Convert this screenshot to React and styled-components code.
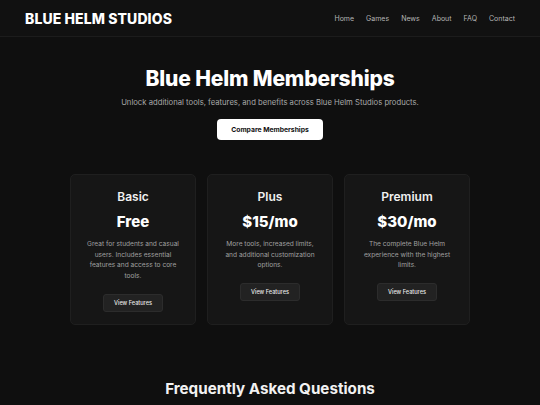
import React from "react";
import styled, { createGlobalStyle } from "styled-components";

const GlobalStyle = createGlobalStyle`
  html, body {
    margin: 0;
    padding: 0;
    background: #0f0f0f;
    font-family: Inter, "Noto Sans", sans-serif;
    color: #f2f2f2;
  }
  * { box-sizing: border-box; }
`;

const Header = styled.header`
  display: flex;
  align-items: center;
  justify-content: space-between;
  height: 37px;
  padding: 0 25px;
  background: #111111;
  border-bottom: 1px solid #1c1c1c;
`;

const Logo = styled.div`
  font-size: 14px;
  font-weight: 800;
  letter-spacing: 0.1px;
  color: #ffffff;
`;

const Nav = styled.nav`
  display: flex;
  gap: 12px;
`;

const NavLink = styled.a`
  font-size: 7px;
  color: #b5b5b5;
  text-decoration: none;
`;

const Hero = styled.section`
  display: flex;
  flex-direction: column;
  align-items: center;
  padding-top: 27px;
`;

const Title = styled.h1`
  margin: 0;
  font-size: 21px;
  font-weight: 800;
  letter-spacing: -0.15px;
  line-height: 30px;
  color: #ffffff;
`;

const Subtitle = styled.p`
  margin: 4px 0 0;
  font-size: 7.7px;
  color: #a8a8a8;
`;

const PrimaryButton = styled.button`
  margin-top: 12px;
  width: 106px;
  height: 21px;
  border: none;
  border-radius: 4px;
  background: #ffffff;
  color: #111;
  font-family: inherit;
  font-size: 6.8px;
  font-weight: 700;
`;

const Cards = styled.div`
  display: grid;
  grid-template-columns: repeat(3, 126px);
  gap: 11px;
  justify-content: center;
  margin-top: 34px;
`;

const Card = styled.div`
  display: flex;
  flex-direction: column;
  align-items: center;
  height: 151px;
  padding: 14px 15px 0;
  background: #161616;
  border: 1px solid #1f1f1f;
  border-radius: 5px;
  text-align: center;
`;

const PlanName = styled.h3`
  margin: 0;
  font-size: 12px;
  font-weight: 600;
  line-height: 16px;
  color: #f0f0f0;
`;

const Price = styled.div`
  margin-top: 7px;
  font-size: 15px;
  font-weight: 800;
  line-height: 19px;
  color: #ffffff;
`;

const Description = styled.p`
  margin: 8px 0 0;
  font-size: 6.6px;
  line-height: 10.7px;
  color: #a0a0a0;
`;

const SecondaryButton = styled.button`
  margin-top: 12px;
  width: 60px;
  height: 18px;
  border: 1px solid #2c2c2c;
  border-radius: 3px;
  background: #222222;
  color: #e8e8e8;
  font-family: inherit;
  font-size: 5.6px;
  font-weight: 500;
`;

const Faq = styled.h2`
  margin: 54px 0 0;
  text-align: center;
  font-size: 15.2px;
  font-weight: 700;
  color: #f2f2f2;
`;

const plans = [
  {
    name: "Basic",
    price: "Free",
    desc: "Great for students and casual users. Includes essential features and access to core tools.",
  },
  {
    name: "Plus",
    price: "$15/mo",
    desc: "More tools, increased limits, and additional customization options.",
  },
  {
    name: "Premium",
    price: "$30/mo",
    desc: "The complete Blue Helm experience with the highest limits.",
  },
];

const App = () => {
  return (
    <>
      <GlobalStyle />
      <Header>
        <Logo>BLUE HELM STUDIOS</Logo>
        <Nav>
          {["Home", "Games", "News", "About", "FAQ", "Contact"].map((l) => (
            <NavLink key={l} href="#">{l}</NavLink>
          ))}
        </Nav>
      </Header>
      <Hero>
        <Title>Blue Helm Memberships</Title>
        <Subtitle>Unlock additional tools, features, and benefits across Blue Helm Studios products.</Subtitle>
        <PrimaryButton>Compare Memberships</PrimaryButton>
        <Cards>
          {plans.map((p) => (
            <Card key={p.name}>
              <PlanName>{p.name}</PlanName>
              <Price>{p.price}</Price>
              <Description>{p.desc}</Description>
              <SecondaryButton>View Features</SecondaryButton>
            </Card>
          ))}
        </Cards>
      </Hero>
      <Faq>Frequently Asked Questions</Faq>
    </>
  );
};

export default App;
